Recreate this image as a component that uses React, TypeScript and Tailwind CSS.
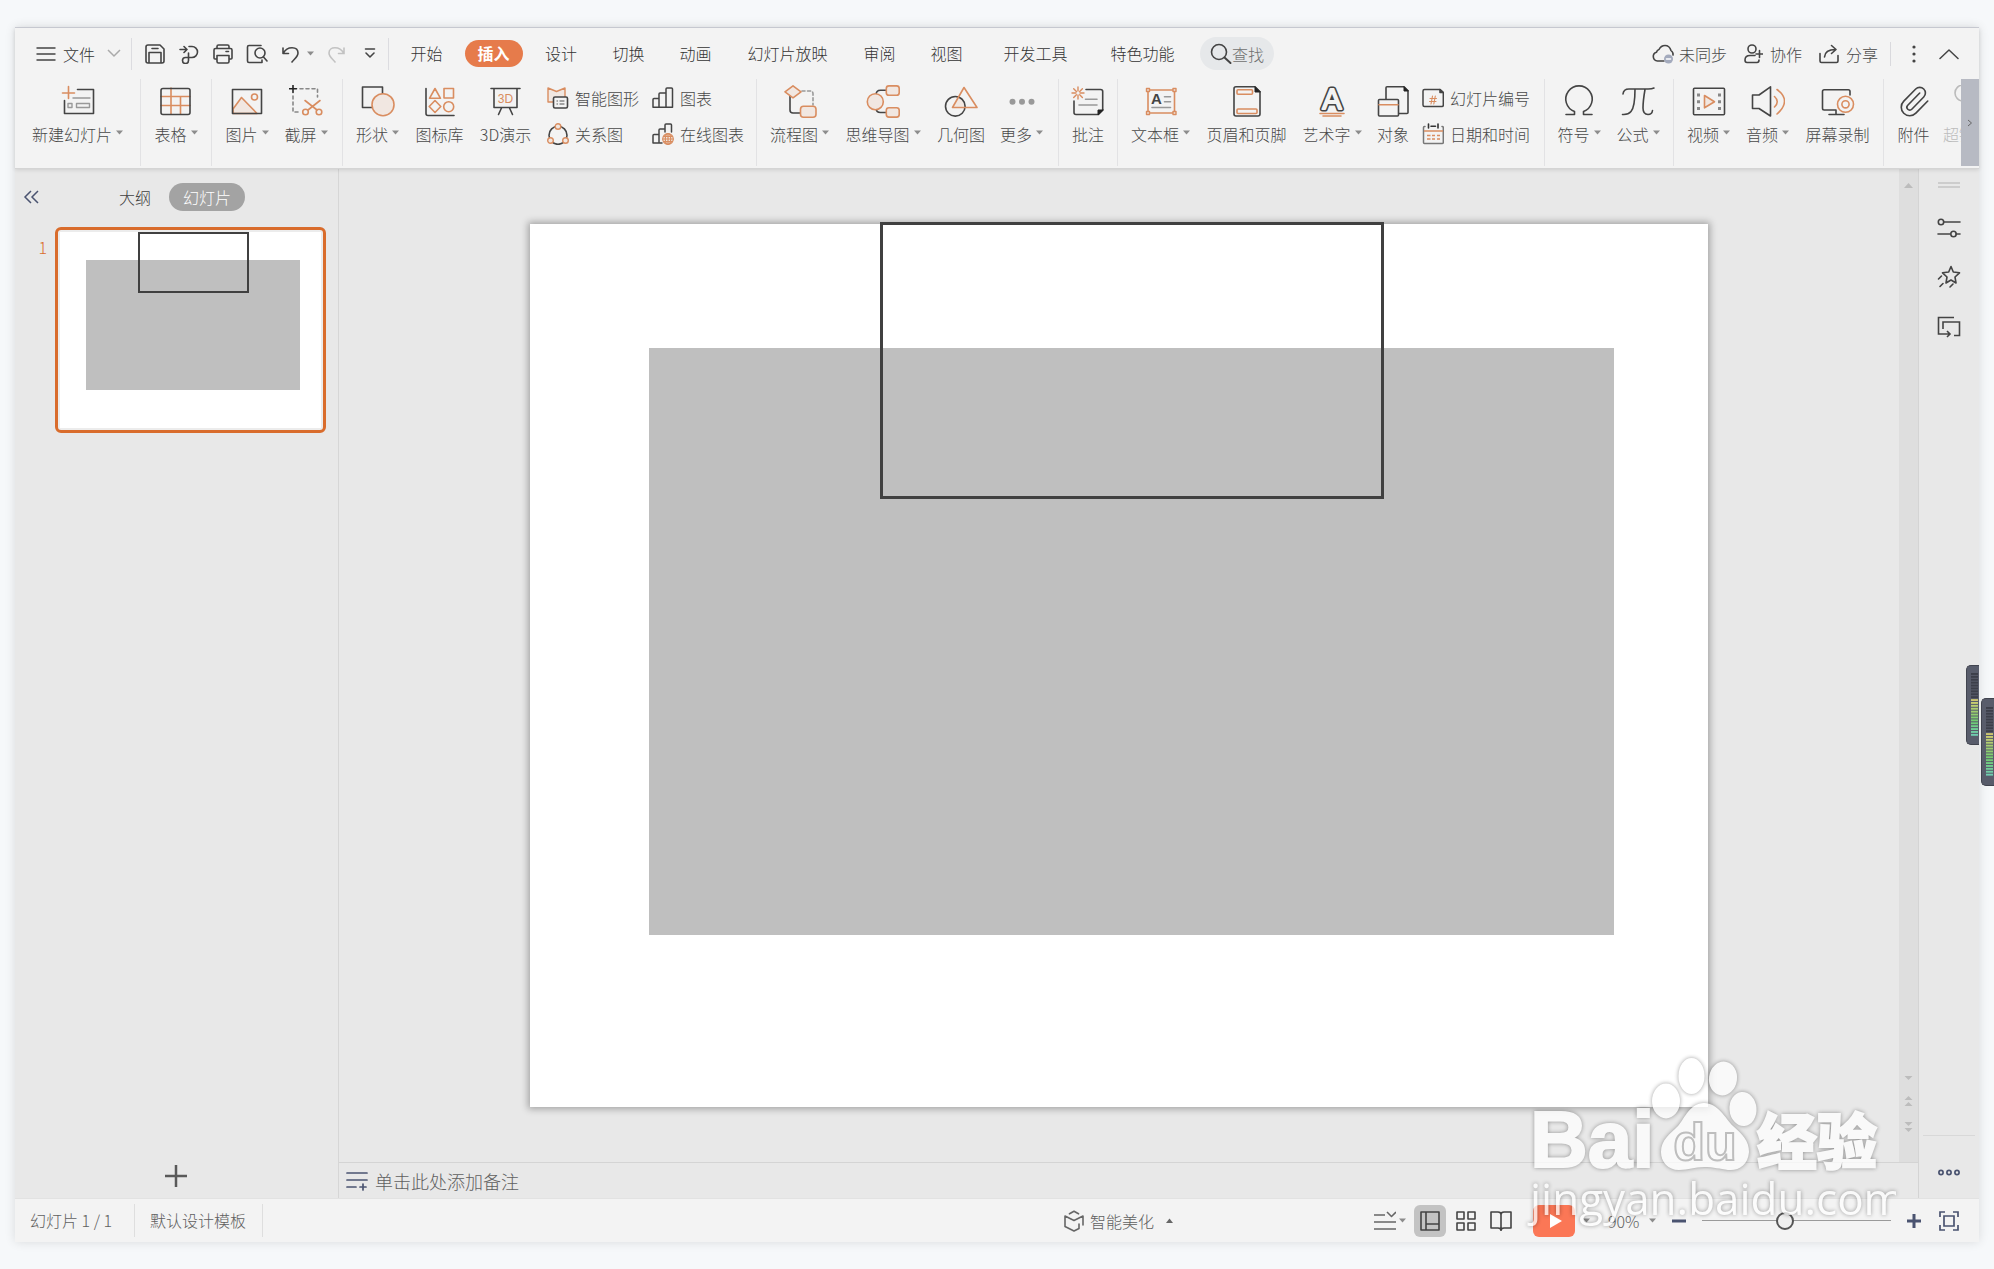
import React from 'react';

const D = '#444444';
const O = '#d98d60';
const T = '#f1e7e1';
const G = '#999999';
const N = '#4a5370';

function Svg({ w, h, children }: { w: number; h: number; children: React.ReactNode }) {
  return (
    <svg width={w} height={h} viewBox={`0 0 ${w} ${h}`} fill="none" stroke={D} strokeWidth="1.6" strokeLinecap="round" strokeLinejoin="round" className="shrink-0" aria-hidden="true">
      {children}
    </svg>
  );
}

function Caret({ up = false }: { up?: boolean }) {
  return (
    <svg width="7" height="5" viewBox="0 0 7 5" className="shrink-0" aria-hidden="true">
      <path d={up ? 'M0 5L3.5 0.5L7 5Z' : 'M0 0.5H7L3.5 4.5Z'} fill={up ? '#666' : '#8c8c8c'} />
    </svg>
  );
}

/* ---------- ribbon ---------- */

const icons: Record<string, React.ReactNode> = {
  newSlide: (
    <>
      <path d="M16.5 4.5H32.5V28.5H3.5V15.5" />
      <path d="M7.5 1.5V13.5M1.5 8H13.5" stroke={O} />
      <path d="M12 13H29M7 18.5h4v4h-4zM15.5 18.5h13v4h-13z" stroke={G} strokeWidth="1.4" />
    </>
  ),
  table: (
    <>
      <path d="M12 3V29M21.5 12V29M2 11.5H31M2 20.5H31" stroke={O} />
      <rect x="2" y="3.5" width="29" height="26" rx="2" />
    </>
  ),
  picture: (
    <>
      <path d="M3 24L11.5 12.5L27 28.5H3Z" fill={T} stroke={O} />
      <circle cx="24.5" cy="12" r="3" stroke={O} />
      <rect x="2.5" y="4.5" width="29" height="24" />
    </>
  ),
  capture: (
    <>
      <path d="M4 0.5V7.5M0.5 3.8H7.5" stroke="#222" />
      <path d="M11 3.8H28.5V12M4 11V27H11" stroke="#888" strokeDasharray="3 3" />
      <path d="M16 15.5L28 25M31 15.5L19 25" stroke={O} />
      <circle cx="16.5" cy="27" r="2.8" stroke={O} />
      <circle cx="30" cy="27" r="2.8" stroke={O} />
    </>
  ),
  shapes: (
    <>
      <rect x="1.5" y="2" width="20" height="20.5" />
      <circle cx="22" cy="19.7" r="11" fill={T} stroke={O} />
    </>
  ),
  library: (
    <>
      <path d="M3 3.5V28.5Q3 30.5 5 30.5H31" />
      <path d="M12 3.5L17.5 13.3H6.5ZM21 3.5h9.5v9.5h-9.5zM12 15.5L17.8 21.5L12 27.5L6.2 21.5Z" stroke={O} />
      <circle cx="25.7" cy="21.7" r="5" stroke={O} />
    </>
  ),
  board3d: (
    <>
      <path d="M2 3.5H31M5 3.5V22.5H28V3.5M12.5 23L9.5 29.5M20.5 23L23.5 29.5" />
      <text x="16.5" y="17.5" fontSize="12" textAnchor="middle" fill={O} stroke="none" className="font-['Liberation_Sans']">3D</text>
    </>
  ),
  flow: (
    <>
      <path d="M7 11V25Q7 28 10 28H17" />
      <path d="M19 6H27Q30 6 30 9V20" stroke="#999" strokeDasharray="3 2.5" />
      <path d="M10 0.8L18 6.8L10 12.8L2 6.8Z" fill={T} stroke={O} />
      <rect x="17.5" y="21.3" width="15.5" height="11" rx="3" fill={T} stroke={O} />
    </>
  ),
  mind: (
    <>
      <path d="M10 10Q10 5.2 14.5 5.2H20M10 23Q10 27.5 14.5 27.5H20" />
      <circle cx="9.3" cy="16.7" r="8" fill={T} stroke={O} />
      <rect x="20.3" y="0.9" width="12.9" height="9.4" rx="2.6" fill={T} stroke={O} />
      <rect x="20.3" y="22.7" width="12.9" height="9.4" rx="2.6" fill={T} stroke={O} />
    </>
  ),
  geometry: (
    <>
      <path d="M9 22L14.5 13Q20 15.5 21.3 21.5Z" fill={T} stroke="none" />
      <circle cx="11.3" cy="21.3" r="9.8" />
      <path d="M20 2.5L33 22.5H8.5Z" stroke={O} />
    </>
  ),
  more: (
    <g fill="#999" stroke="none">
      <circle cx="7.5" cy="16.7" r="3" />
      <circle cx="17" cy="16.7" r="3" />
      <circle cx="26.5" cy="16.7" r="3" />
    </g>
  ),
  comment: (
    <>
      <path d="M15 4.5H29.5Q31.7 4.5 31.7 6.5V25L27.5 29.5H5Q3 29.5 3 27.5V16" />
      <path d="M27 29.5V25H32Z" fill="#222" stroke="#222" strokeWidth="1" />
      <path d="M14.5 14.3H26M8 20H26" stroke={G} />
      <path d="M7 2V6M7 10V14M1 8H5M9 8H13M2.7 3.7L5.4 6.4M8.7 9.7L11.4 12.4M11.4 3.7L8.7 6.4M5.4 9.7L2.7 12.4" stroke={O} strokeWidth="1.4" />
    </>
  ),
  textbox: (
    <>
      <rect x="4" y="5" width="26.5" height="23" stroke={O} />
      <g fill={T} stroke={O} strokeWidth="1.4">
        <rect x="2.5" y="3.5" width="3" height="3" />
        <rect x="29" y="3.5" width="3" height="3" />
        <rect x="2.5" y="26.5" width="3" height="3" />
        <rect x="29" y="26.5" width="3" height="3" />
      </g>
      <text x="12.5" y="19" fontSize="15" textAnchor="middle" fill={D} stroke="none" className="font-['Liberation_Sans'] font-bold">A</text>
      <path d="M20.5 11.7H26.5M20.5 16.7H26.5M8 22.5H26.5" stroke={G} />
    </>
  ),
  header: (
    <>
      <path d="M25 1.8H6Q4 1.8 4 3.8V29Q4 31 6 31H28Q30 31 30 29V6.8Z" />
      <path d="M25 2V7H30Z" fill="#222" stroke="#222" strokeWidth="1" />
      <rect x="7" y="4.8" width="15.5" height="4.5" rx="1" stroke={O} />
      <rect x="7" y="24" width="20" height="4.5" rx="1" stroke={O} />
    </>
  ),
  wordart: (
    <>
      <text x="17" y="24" fontSize="29" textAnchor="middle" fill="#f3f3f3" stroke={D} strokeWidth="5" className="font-['Liberation_Sans']">A</text>
      <text x="17" y="24" fontSize="29" textAnchor="middle" fill="#f3f3f3" stroke="#f3f3f3" strokeWidth="1.8" className="font-['Liberation_Sans']" aria-hidden="true">A</text>
      <path d="M5 28.5H29M8 31H26" stroke={O} />
    </>
  ),
  object: (
    <>
      <path d="M28 1.8H11Q10 1.8 10 2.8V28.5H31Q32 28.5 32 27.5V5.8Z" />
      <path d="M28 2V6H32Z" fill="#222" stroke="#222" strokeWidth="1" />
      <rect x="2.5" y="14.5" width="20" height="16.5" rx="1" fill="#f3f3f3" />
      <path d="M3 19.7H22" stroke={O} />
    </>
  ),
  omega: <path d="M4 29.5H12.5V26.5A13.2 13.2 0 1 1 21.5 26.5V29.5H30" />,
  pi: <path d="M2 9Q2.5 4 8 4H27Q31 4 33 3M14 4Q14 22 10 26.5Q7 30 1.5 29.5M24 4.5Q22 16 22 23Q22 29.5 27 29.5Q31 29.5 31.5 25.5" />,
  video: (
    <>
      <rect x="1.5" y="3.3" width="31" height="26.5" rx="1" />
      <g fill="#888" stroke="none">
        <path d="M5 8.5h3v3h-3zM5 15.3h3v3h-3zM5 22h3v3h-3zM26 8.5h3v3h-3zM26 15.3h3v3h-3zM26 22h3v3h-3z" />
      </g>
      <path d="M12.5 10.5L22.5 16.7L12.5 22.8Z" fill={T} stroke={O} />
    </>
  ),
  audio: (
    <>
      <path d="M1.5 10H8L19.5 1.8V31L8 23.5H1.5Z" />
      <path d="M23.5 11.5Q29 16.5 23.5 22M26 4.5Q41 15.5 26 29" stroke={O} />
    </>
  ),
  record: (
    <>
      <path d="M29 10V6.5Q29 4.8 27.3 4.8H3.2Q1.5 4.8 1.5 6.5V23.3Q1.5 25 3.2 25H15M15 25V29.5M8 29.5H23" />
      <circle cx="24.5" cy="19.3" r="8" fill="#f3f3f3" stroke={O} />
      <circle cx="24.5" cy="19.3" r="3.6" stroke={O} />
    </>
  ),
  clip: (
    <g transform="translate(0 -0.5) scale(1.42)" strokeWidth="1.15">
      <path d="m16 6-8.414 8.586a2 2 0 0 0 2.829 2.829l8.414-8.586a4 4 0 1 0-5.657-5.657l-8.379 8.551a6 6 0 1 0 8.485 8.485l8.379-8.551" />
    </g>
  ),
  link: <circle cx="13" cy="8" r="8" stroke="#bbb" />,
};

const small: Record<string, React.ReactNode> = {
  smart: (
    <>
      <path d="M1 1L9.5 4.5L18 1V15H1Z" fill={T} stroke={O} strokeWidth="1.4" />
      <rect x="6.5" y="10" width="14" height="11" rx="1.5" fill="#f3f3f3" />
      <path d="M10 14H10.5M13 14H17M10 17H10.5M13 17H17" stroke="#888" strokeWidth="1.3" />
    </>
  ),
  relation: (
    <>
      <circle cx="11" cy="12.3" r="9" />
      <g fill={T} stroke={O} strokeWidth="1.4">
        <circle cx="11" cy="3.5" r="2.8" />
        <circle cx="3.5" cy="17.5" r="2.8" />
        <circle cx="18.5" cy="17.5" r="2.8" />
      </g>
    </>
  ),
  chart: <path d="M1 20.3V12.5Q1 11.5 2 11.5H7V20.3ZM7 20.3V7Q7 6 8 6H14V20.3ZM14 20.3V2Q14 1 15 1H19.5Q20.5 1 20.5 2V20.3Z" strokeWidth="1.5" />,
  online: (
    <>
      <path d="M10 20H1V12.5Q1 11.5 2 11.5H7M7 20V7Q7 6 8 6H13V9M13 9V2Q13 1 14 1H18.5Q19.5 1 19.5 2V9" strokeWidth="1.5" />
      <g stroke={O} strokeWidth="1.2">
        <circle cx="16" cy="16" r="5.3" fill={T} />
        <path d="M10.7 16H21.3M16 10.7V21.3M11.7 13.3H20.3M11.7 18.7H20.3" />
        <ellipse cx="16" cy="16" rx="2.7" ry="5.3" />
      </g>
    </>
  ),
  number: (
    <>
      <path d="M18 2.5H2.5Q1 2.5 1 4V18Q1 19.5 2.5 19.5H20Q21.3 19.5 21.3 18V5.5Z" strokeWidth="1.5" />
      <path d="M18 2.5V5.5H21.3Z" fill="#222" />
      <path d="M8 11.5H14.5M7.5 14.5H14M10.5 9L9 17M13.3 9L11.8 17" stroke={O} strokeWidth="1.1" />
    </>
  ),
  date: (
    <>
      <path d="M3 3.5H2.5Q1.5 3.5 1.5 4.5V19.5Q1.5 20.5 2.5 20.5H20Q21.3 20.5 21.3 19.5V4.5Q21.3 3.5 20 3.5" stroke="#777" strokeWidth="1.5" />
      <path d="M6.5 1V5M16 1V5M9 3.3H13.5" stroke="#333" />
      <path d="M2 8H21M5 12.5H8.5M10 12.5H13M15 12.5H18M5 16H8.5M10 16H13M15 16H18" stroke={O} strokeWidth="1.4" strokeLinecap="butt" />
    </>
  ),
};

function Big({ icon, label, w, caret = false, faded = false }: { icon: string; label: string; w: string; caret?: boolean; faded?: boolean }) {
  return (
    <button type="button" className={`flex shrink-0 flex-col items-center pt-[6px] ${w} ${faded ? 'text-[#bcbcbc]' : ''}`}>
      <Svg w={34} h={34}>{icons[icon]}</Svg>
      <span className="mt-[3px] flex items-center gap-1 whitespace-nowrap leading-6">
        {label}
        {caret && <span className="mb-1"><Caret /></span>}
      </span>
    </button>
  );
}

function SmallColumn({ items, w }: { items: [string, string][]; w: string }) {
  return (
    <div className={`flex shrink-0 flex-col gap-3 pt-[7px] ${w}`}>
      {items.map(([icon, label]) => (
        <button key={label} type="button" className="flex h-6 items-center gap-[6px] whitespace-nowrap">
          <Svg w={22} h={22}>{small[icon]}</Svg>
          {label}
        </button>
      ))}
    </div>
  );
}

function Group({ children, pad }: { children: React.ReactNode; pad: string }) {
  return <div className={`flex h-[87px] shrink-0 border-r border-[#e2e2e4] ${pad}`}>{children}</div>;
}

function Ribbon() {
  return (
    <div className="relative flex h-[89px] overflow-hidden text-[#484848]">
      <div className="flex min-w-0 flex-1 overflow-hidden">
        <Group pad="">
          <Big icon="newSlide" label="新建幻灯片" w="w-[125px]" caret />
        </Group>
        <Group pad="">
          <Big icon="table" label="表格" w="w-[70px]" caret />
        </Group>
        <Group pad="px-[6px]">
          <Big icon="picture" label="图片" w="w-[58px]" caret />
          <Big icon="capture" label="截屏" w="w-[60px]" caret />
        </Group>
        <Group pad="pl-[5px]">
          <Big icon="shapes" label="形状" w="w-[59px]" caret />
          <Big icon="library" label="图标库" w="w-[65px]" />
          <Big icon="board3d" label="3D演示" w="w-[67px]" />
          <SmallColumn w="w-[113px] pl-2" items={[['smart', '智能图形'], ['relation', '关系图']]} />
          <SmallColumn w="w-[104px]" items={[['chart', '图表'], ['online', '在线图表']]} />
        </Group>
        <Group pad="pl-[5px] pr-2">
          <Big icon="flow" label="流程图" w="w-[75px]" caret />
          <Big icon="mind" label="思维导图" w="w-[92px]" caret />
          <Big icon="geometry" label="几何图" w="w-[64px]" />
          <Big icon="more" label="更多" w="w-[57px]" caret />
        </Group>
        <Group pad="">
          <Big icon="comment" label="批注" w="w-[58px]" />
        </Group>
        <Group pad="pl-[5px]">
          <Big icon="textbox" label="文本框" w="w-[75px]" caret />
          <Big icon="header" label="页眉和页脚" w="w-[97px]" />
          <Big icon="wordart" label="艺术字" w="w-[74px]" caret />
          <Big icon="object" label="对象" w="w-[48px]" />
          <SmallColumn w="w-[127px] pl-[5px]" items={[['number', '幻灯片编号'], ['date', '日期和时间']]} />
        </Group>
        <Group pad="px-[5px]">
          <Big icon="omega" label="符号" w="w-[58px]" caret />
          <Big icon="pi" label="公式" w="w-[60px]" caret />
        </Group>
        <Group pad="px-[5px]">
          <Big icon="video" label="视频" w="w-[59px]" caret />
          <Big icon="audio" label="音频" w="w-[59px]" caret />
          <Big icon="record" label="屏幕录制" w="w-[81px]" />
        </Group>
        <div className="flex shrink-0 pl-[5px]">
          <Big icon="clip" label="附件" w="w-[49px]" />
          <Big icon="link" label="超链接" w="w-[58px]" faded />
        </div>
      </div>
      <button type="button" aria-label="向右滚动" className="mb-[2px] flex w-[18px] items-center justify-center bg-[#b7bac3]">
        <svg width="6" height="8" viewBox="0 0 6 8" fill="none" stroke="#666" aria-hidden="true"><path d="M1 1L4.5 4L1 7" /></svg>
      </button>
    </div>
  );
}

/* ---------- top row ---------- */

function IconButton({ label, w, children }: { label: string; w: string; children: React.ReactNode }) {
  return (
    <button type="button" aria-label={label} className={`flex h-8 shrink-0 items-center justify-center ${w}`}>
      {children}
    </button>
  );
}

const tabs: { label: string; w: string; active?: boolean }[] = [
  { label: '开始', w: 'w-[67px]' },
  { label: '插入', w: 'w-[67px]', active: true },
  { label: '设计', w: 'w-[68px]' },
  { label: '切换', w: 'w-[67px]' },
  { label: '动画', w: 'w-[67px]' },
  { label: '幻灯片放映', w: 'w-[117px]' },
  { label: '审阅', w: 'w-[67px]' },
  { label: '视图', w: 'w-[67px]' },
  { label: '开发工具', w: 'w-[111px]' },
  { label: '特色功能', w: 'w-[103px]' },
];

function MenuRow() {
  return (
    <div className="flex h-[51px] items-center text-[#333333]">
      <button type="button" className="ml-[21px] flex h-8 shrink-0 items-center border-r border-[#dcdce0] pr-[10px]">
        <Svg w={20} h={20}><path d="M0.5 4H19.5M0.5 10H19.5M0.5 16H19.5" strokeLinecap="butt" /></Svg>
        <span className="ml-[7px]">文件</span>
        <svg width="14" height="9" viewBox="0 0 14 9" fill="none" stroke="#aaa" strokeWidth="1.5" className="ml-3" aria-hidden="true"><path d="M1 1L7 7L13 1" /></svg>
      </button>
      <div className="flex h-8 shrink-0 items-center border-r border-[#dcdce0] pr-[5px] pl-[6px]">
        <IconButton label="保存" w="w-[34px]">
          <Svg w={20} h={20}><path d="M1 3Q1 1 3 1H15L19 5V17Q19 19 17 19H3Q1 19 1 17ZM4 19V8.5H16V19M7 4.5H13" /></Svg>
        </IconButton>
        <IconButton label="输出" w="w-[34px]">
          <Svg w={20} h={20}><path d="M1 5.5H8M5 2.5L8 5.5L5 8.5M10 2.5H13A5.5 5.5 0 0 1 13 13.5H6.5A3 3 0 1 0 9.5 16.5V9" /></Svg>
        </IconButton>
        <IconButton label="打印" w="w-[34px]">
          <Svg w={20} h={20}><path d="M4 4.5V2.5Q4 1 5.5 1H14.5Q16 1 16 2.5V4.5M4 15H2Q1 15 1 14V6Q1 4.5 2.5 4.5H17.5Q19 4.5 19 6V14Q19 15 18 15H16M4 11.5H16V17.5Q16 19 14.5 19H5.5Q4 19 4 17.5ZM13 7.5H15.5" /></Svg>
        </IconButton>
        <IconButton label="打印预览" w="w-[34px]">
          <Svg w={22} h={20}><path d="M9 18.5H3Q1.5 18.5 1.5 17V3Q1.5 1.5 3 1.5H15M9 18.5H16V16" /><circle cx="14" cy="9" r="5" /><path d="M17.5 13L21 17" /></Svg>
        </IconButton>
        <IconButton label="撤销" w="w-[33px]">
          <Svg w={18} h={18}><path d="M1 3V8.5H6.5M1.5 8C5 1 16 1 16 8C16 12 12 14 10 17" /></Svg>
        </IconButton>
        <Caret />
        <IconButton label="恢复" w="w-[43px]">
          <svg width="18" height="18" viewBox="0 0 18 18" fill="none" stroke="#c2c2c2" strokeWidth="1.6" strokeLinecap="round" aria-hidden="true"><path d="M17 3V8.5H11.5M16.5 8C13 1 2 1 2 8C2 12 6 14 8 17" /></svg>
        </IconButton>
        <IconButton label="自定义" w="w-[26px]">
          <Svg w={12} h={11}><path d="M1.5 1H10.5M2 5L6 9L10 5" /></Svg>
        </IconButton>
      </div>
      <nav className="ml-1 flex shrink-0 items-center">
        {tabs.map((t) => (
          <button
            key={t.label}
            type="button"
            className={`flex shrink-0 justify-center whitespace-nowrap leading-[27px] ${t.w}`}
          >
            {t.active ? <span className="rounded-full bg-[#e67b4b] px-[13px] font-bold text-white">{t.label}</span> : t.label}
          </button>
        ))}
      </nav>
      <label className="ml-[6px] flex h-[33px] w-[74px] shrink-0 items-center rounded-full bg-[#e6e8ea] pl-[10px]">
        <Svg w={22} h={22}><circle cx="9" cy="9" r="7.5" /><path d="M14.5 14.5L20.5 20" strokeWidth="2" /></Svg>
        <input aria-label="查找" placeholder="查找" className="w-9 bg-transparent text-[#404040] outline-none placeholder:text-[#707070]" />
      </label>
      <div className="ml-auto flex shrink-0 items-center pr-[18px] text-[#484848]">
        <button type="button" className="flex items-center gap-1">
          <Svg w={23} h={20}>
            <path d="M12 17H5.5A4.5 4.5 0 0 1 4.5 8.2Q5 6 7 5.5Q9 1.5 13 1.5Q17.5 1.5 19 6.5Q21.5 8.5 21 11" />
            <circle cx="16.5" cy="15" r="4.5" fill="#a3aabd" stroke="none" />
            <path d="M14.5 15H18.5" stroke="#fff" />
          </Svg>
          未同步
        </button>
        <button type="button" className="ml-[17px] flex items-center gap-[7px]">
          <Svg w={19} h={20}><circle cx="8" cy="5" r="4" /><path d="M11 11.5H6Q1 11.5 1 16Q1 18.5 3 18.5H13Q15 18.5 15 16M15.5 6.5V13.5M12 10H18.5" /></Svg>
          协作
        </button>
        <button type="button" className="ml-[17px] flex items-center gap-[7px] border-r border-[#d9d9dd] pr-3">
          <Svg w={20} h={20}><path d="M1 9.5V17Q1 18.5 2.5 18.5H17.5Q19 18.5 19 17V11.5M5.5 13Q6 5.5 16.5 5.5M12.5 1.5L17 5.5L12.5 9.5" /></Svg>
          分享
        </button>
        <IconButton label="更多选项" w="w-[46px]">
          <svg width="4" height="18" viewBox="0 0 4 18" fill="#444" aria-hidden="true"><circle cx="2" cy="2" r="1.6" /><circle cx="2" cy="9" r="1.6" /><circle cx="2" cy="16" r="1.6" /></svg>
        </IconButton>
        <IconButton label="收起功能区" w="w-[24px]">
          <Svg w={20} h={12}><path d="M1 10.5L10 2L19 10.5" strokeWidth="1.5" /></Svg>
        </IconButton>
      </div>
    </div>
  );
}

/* ---------- slide ---------- */

function SlideShapes({ line }: { line: string }) {
  return (
    <>
      <div className="absolute top-[14.1%] left-[10.1%] h-[66.4%] w-[81.9%] bg-[#bfbfbf]" />
      <div className={`absolute left-[29.7%] w-[42.8%] border-[#404040] ${line}`} />
    </>
  );
}

function SlidePanel() {
  return (
    <aside className="flex w-[324px] shrink-0 flex-col border-r border-[#d6d6d6]">
      <div className="mt-[14px] flex h-7 items-center">
        <button type="button" aria-label="收起" className="ml-2">
          <svg width="16" height="14" viewBox="0 0 16 14" fill="none" stroke={N} strokeWidth="1.5" aria-hidden="true"><path d="M8 1L2 7L8 13M15 1L9 7L15 13" /></svg>
        </button>
        <button type="button" className="ml-20 text-[#404040]">大纲</button>
        <button type="button" className="ml-[18px] h-7 w-[76px] rounded-full bg-[#a3a3a3] text-white">幻灯片</button>
      </div>
      <div className="mt-4 flex">
        <span className="w-10 pt-2 pr-2 text-right text-[#d96c2c]">1</span>
        <button type="button" aria-label="幻灯片 1" className="h-[206px] w-[271px] rounded-md border-[3px] border-[#d96c2c] bg-[#ececec] p-[2px]">
          <span className="relative block h-full w-full bg-white"><SlideShapes line="top-0 h-[31%] border-2" /></span>
        </button>
      </div>
      <button type="button" aria-label="新建幻灯片" className="mt-auto mb-[10px] ml-[149px] w-6">
        <svg width="24" height="24" viewBox="0 0 24 24" stroke="#595959" strokeWidth="2.5" aria-hidden="true"><path d="M1 12H23M12 1V23" /></svg>
      </button>
    </aside>
  );
}

function ScrollBar() {
  return (
    <div className="flex w-5 shrink-0 flex-col items-center border-r border-[#d4d4d4] bg-[#dedede] pt-[14px] pb-5">
      <svg width="9" height="5" viewBox="0 0 9 5" fill="#bcbcbc" aria-hidden="true"><path d="M0 5L4.5 0L9 5Z" /></svg>
      <svg width="9" height="60" viewBox="0 0 9 60" fill="#bcbcbc" className="mt-auto mb-[8px]" aria-hidden="true">
        <path d="M0.5 2H8.5L4.5 6ZM0.5 26L4.5 22L8.5 26ZM0.5 32L4.5 28L8.5 32ZM0.5 48H8.5L4.5 52ZM0.5 54H8.5L4.5 58Z" />
      </svg>
    </div>
  );
}

function Editor() {
  return (
    <div className="flex min-w-0 flex-1 flex-col">
      <div className="flex flex-1">
        <div className="flex min-w-0 flex-1 items-center justify-center">
          <div className="relative aspect-[4/3] w-[75.5%] bg-white shadow-[0_0_7px_2px_rgba(0,0,0,0.3)]">
            <SlideShapes line="-top-[2px] h-[31.4%] border-[3px]" />
          </div>
        </div>
        <ScrollBar />
      </div>
      <div className="flex h-9 items-center border-t border-r border-[#d4d4d4] pl-[7px]">
        <Svg w={22} h={20}><g stroke={N} strokeWidth="1.7"><path d="M1 2H21M1 9H21M1 16H10M14 16H20M17 13V19" /></g></Svg>
        <input aria-label="备注" placeholder="单击此处添加备注" className="ml-[7px] flex-1 bg-transparent text-lg outline-none placeholder:text-[#606060]" />
      </div>
    </div>
  );
}

function ToolRail() {
  return (
    <div className="flex w-[60px] shrink-0 flex-col items-center pt-[12px]">
      <svg width="22" height="8" viewBox="0 0 22 8" stroke="#c4c4c4" strokeWidth="1.5" aria-hidden="true"><path d="M0 2H22M0 6H22" /></svg>
      <button type="button" aria-label="属性" className="mt-[27px]">
        <Svg w={24} h={24}><path d="M7 6H23M1 18H13M19 18H23" /><circle cx="4" cy="6" r="2.7" /><circle cx="16.5" cy="18" r="2.7" /></Svg>
      </button>
      <button type="button" aria-label="动画" className="mt-[25px]">
        <Svg w={24} h={24}><path d="M14 1.5L16.3 7L22.5 7.8L18 12L19 18L14 15L9 18L10 12L5.5 7.8L11.7 7ZM1.5 14L4.5 11M3 21.5L6 18.5M13 22L16 19" /></Svg>
      </button>
      <button type="button" aria-label="切换" className="mt-[25px]">
        <Svg w={24} h={24}><path d="M17 3.5H1.5V20H12M10 17L13 20L10 23M6 15V8H22.5V21.5H17" strokeLinecap="butt" strokeLinejoin="miter" /></Svg>
      </button>
      <div className="mt-auto flex w-[52px] justify-center border-t border-[#d8d8d8] pt-[33px] pb-[22px]">
        <button type="button" aria-label="更多">
          <svg width="22" height="7" viewBox="0 0 22 7" fill="none" stroke={N} strokeWidth="1.7" className="block" aria-hidden="true"><circle cx="3" cy="3.5" r="2.1" /><circle cx="11" cy="3.5" r="2.1" /><circle cx="19" cy="3.5" r="2.1" /></svg>
        </button>
      </div>
    </div>
  );
}

/* ---------- status bar ---------- */

function StatusBar() {
  return (
    <footer className="flex h-11 items-center border-t border-[#e2e2e2] bg-[#f3f3f3] text-[#606060]">
      <div className="flex flex-1 items-center">
        <span className="h-[33px] w-[120px] border-r border-[#dedede] pl-[15px] leading-[33px]">幻灯片 1 / 1</span>
        <span className="h-[33px] w-[128px] border-r border-[#dedede] pl-[15px] leading-[33px]">默认设计模板</span>
      </div>
      <button type="button" className="flex w-[113px] items-center whitespace-nowrap">
        <Svg w={20} h={22}><path d="M5.5 3.8L10 1.3L14.5 3.8M1 6V16.5L10 21L15 18.5V14M1 6L10 10.5L19 6V15" stroke="#666" /></Svg>
        <span className="mr-3 ml-[6px]">智能美化</span>
        <Caret up />
      </button>
      <div className="ml-[197px] flex items-center">
        <IconButton label="备注" w="w-[22px]">
          <Svg w={22} h={20}><path d="M0 4H11M0 11H22M0 18H22M13 1L17.5 5.5L22 1" stroke="#666" strokeLinecap="butt" /></Svg>
        </IconButton>
        <span className="ml-[3px]"><Caret /></span>
        <button type="button" aria-label="普通视图" className="ml-2 flex h-8 w-8 items-center justify-center rounded-md bg-[#c3c3c3]">
          <Svg w={20} h={20}><path d="M1 1H19V19H1ZM6 1V19M6 13H19" /></Svg>
        </button>
        <IconButton label="浏览视图" w="w-[40px]">
          <Svg w={20} h={20}><path d="M1 1h7v7h-7zM12 1h7v7h-7zM1 12h7v7h-7zM12 12h7v7h-7z" /></Svg>
        </IconButton>
        <IconButton label="阅读视图" w="w-[30px]">
          <Svg w={22} h={20}><path d="M1 1H8Q11 1 11 3.5Q11 1 14 1H21V17H14Q11 17 11 19.5Q11 17 8 17H1ZM11 3.5V19" /></Svg>
        </IconButton>
        <button type="button" aria-label="放映" className="ml-[17px] flex h-8 w-[42px] items-center justify-center rounded-md bg-[#fb7756]">
          <svg width="14" height="16" viewBox="0 0 14 16" fill="#fff" className="ml-[3px]" aria-hidden="true"><path d="M1 1L13 8L1 15Z" /></svg>
        </button>
        <span className="ml-2"><Caret /></span>
        <button type="button" className="ml-[18px] flex w-[48px] items-center justify-between">90% <Caret /></button>
        <IconButton label="缩小" w="ml-[14px] w-[18px]">
          <svg width="14" height="14" viewBox="0 0 14 14" stroke={N} strokeWidth="3" aria-hidden="true"><path d="M0 7H14" /></svg>
        </IconButton>
        <input
          type="range"
          aria-label="缩放"
          defaultValue={43}
          className="mx-[14px] h-[18px] w-[189px] appearance-none bg-[linear-gradient(#9a9a9a,#9a9a9a)] bg-[length:100%_1px] bg-center bg-no-repeat [&::-webkit-slider-thumb]:h-[18px] [&::-webkit-slider-thumb]:w-[18px] [&::-webkit-slider-thumb]:appearance-none [&::-webkit-slider-thumb]:rounded-full [&::-webkit-slider-thumb]:border-2 [&::-webkit-slider-thumb]:border-solid [&::-webkit-slider-thumb]:border-[#555555] [&::-webkit-slider-thumb]:bg-[#f0f0f0]"
        />
        <IconButton label="放大" w="w-[18px]">
          <svg width="14" height="14" viewBox="0 0 14 14" stroke={N} strokeWidth="3" aria-hidden="true"><path d="M0 7H14M7 0V14" /></svg>
        </IconButton>
        <IconButton label="适应窗口" w="mr-5 ml-4 w-[20px]">
          <svg width="20" height="20" viewBox="0 0 20 20" fill="none" stroke={N} strokeWidth="1.7" aria-hidden="true"><path d="M1 6V1H6M14 1H19V6M19 14V19H14M6 19H1V14M5 5h10v10h-10z" /></svg>
        </IconButton>
      </div>
    </footer>
  );
}

/* ---------- overlays ---------- */

function Meter({ place, bars, lit }: { place: string; bars: number; lit: number }) {
  const pitch = 2.9;
  return (
    <div className={`absolute flex w-[13px] items-center rounded-l-[5px] border border-r-0 border-[#41444f] bg-[#585c6b] pl-1 ${place}`}>
      <svg width="7" height={Math.ceil(bars * pitch)} aria-hidden="true">
        {Array.from({ length: bars }, (_, i) => {
          const k = (i - (bars - lit)) / lit;
          return <rect key={i} x="0" y={i * pitch} width="7" height="1.9" fill={k < 0 ? '#3c3f4a' : `hsl(${55 + k * 115} 48% 62%)`} />;
        })}
      </svg>
    </div>
  );
}

function Watermark() {
  return (
    <svg width="370" height="190" viewBox="0 0 370 190" className="pointer-events-none absolute right-[98px] bottom-[37px] opacity-75 drop-shadow-[0_0_2px_rgba(0,0,0,0.5)]" aria-hidden="true">
      <g fill="#ffffff">
        <text x="4" y="125" fontSize="80" stroke="#fff" strokeWidth="2" className="font-['Liberation_Sans'] font-bold">Bai</text>
        <ellipse cx="140" cy="59" rx="14" ry="17.5" />
        <ellipse cx="165.5" cy="34" rx="13" ry="18" />
        <ellipse cx="197" cy="36.5" rx="14" ry="17" transform="rotate(8 197 36.5)" />
        <ellipse cx="217" cy="67" rx="13.5" ry="17" transform="rotate(-5 217 67)" />
        <path d="M178 61C192 61 199 76 207 84C217 93 223 99 223 110C222 123 213 129 202 128C194 127 188 125 178 125C168 125 163 128 153 128C142 128 135 120 135 110C135 98 144 92 152 84C159 76 164 61 178 61Z" />
        <text x="179" y="118" fontSize="52" textAnchor="middle" stroke="#b0b0b0" strokeWidth="2" className="font-['Liberation_Sans'] font-bold">du</text>
        <text x="231" y="122" fontSize="60" stroke="#fff" strokeWidth="2" className="font-['Noto_Sans_CJK_SC'] font-black">经验</text>
        <text x="4" y="173" fontSize="44" className="font-['Open_Sans'] font-normal">jingyan.baidu.com</text>
      </g>
    </svg>
  );
}

export default function App() {
  return (
    <div className="relative flex min-h-screen flex-col overflow-hidden bg-[#f6f8fa] px-[15px] py-[27px] font-['Noto_Sans_CJK_SC','Noto_Sans',sans-serif] text-base font-light">
      <div className="flex flex-1 flex-col border-t border-[#ccced6] bg-[#e8e8e8] shadow-[0_0_10px_rgba(0,0,0,0.12)]">
        <header className="z-10 border-b border-[#d4d4d4] bg-[#f3f3f3] shadow-[0_1px_4px_rgba(0,0,0,0.12)]">
          <MenuRow />
          <Ribbon />
        </header>
        <main className="flex flex-1">
          <SlidePanel />
          <Editor />
          <ToolRail />
        </main>
        <StatusBar />
      </div>
      <Meter place="right-[15px] top-[665px] h-[80px]" bars={22} lit={13} />
      <Meter place="right-0 top-[698px] h-[88px]" bars={24} lit={15} />
      <Watermark />
    </div>
  );
}
